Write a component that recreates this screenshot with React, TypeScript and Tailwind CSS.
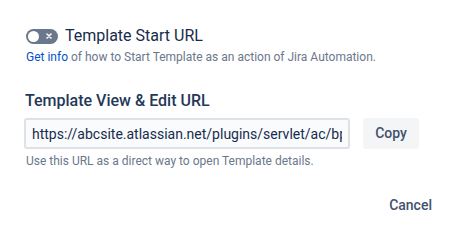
import React from "react";

export default function App() {
  return (
    <div className="w-[463px] h-[248px] bg-white text-[#172B4D]" style={{ fontFamily: "Roboto, 'Liberation Sans', sans-serif" }}>
      <div className="pl-[26px] pr-[31px] pt-[28px]">
        <div className="flex items-center gap-[7px] h-[16px]">
          <div className="w-[32px] h-[15px] rounded-full bg-[#6B778C] flex items-center justify-between px-[2px]">
            <div className="w-[11px] h-[11px] rounded-full bg-white" />
            <svg width="10" height="10" viewBox="0 0 10 10" className="mr-[2px]">
              <path d="M3 3 L7 7 M7 3 L3 7" stroke="white" strokeWidth="1.6" strokeLinecap="round" />
            </svg>
          </div>
          <span className="text-[16px] leading-[16px]">Template Start URL</span>
        </div>
        <div className="mt-[6px] text-[12px] leading-[15px] text-[#6B778C]">
          <span className="text-[#0052CC]">Get info</span> of how to Start Template as an action of Jira Automation.
        </div>
        <div className="mt-[27px] text-[16px] leading-[18px] font-medium text-[#253858] -ml-[1px]">Template View &amp; Edit URL</div>
        <div className="mt-[8px] flex items-center gap-[13px] -ml-[2px]">
          <input
            readOnly
            value="https://abcsite.atlassian.net/plugins/servlet/ac/bpm-templates"
            className="w-[326px] h-[31px] border-2 border-[#DFE1E6] bg-[#FAFBFC] rounded-[3px] px-[6px] text-[14px] text-[#172B4D] outline-none"
            style={{ fontFamily: "Roboto, 'Liberation Sans', sans-serif" }}
          />
          <div className="w-[56px] h-[31px] rounded-[3px] bg-[#F4F5F7] flex items-center justify-center text-[14px] font-medium text-[#42526E]">Copy</div>
        </div>
        <div className="mt-[5px] text-[12px] leading-[14px] text-[#6B778C]">Use this URL as a direct way to open Template details.</div>
        <div className="mt-[27px] flex justify-end">
          <span className="text-[14px] font-medium text-[#42526E]">Cancel</span>
        </div>
      </div>
    </div>
  );
}
